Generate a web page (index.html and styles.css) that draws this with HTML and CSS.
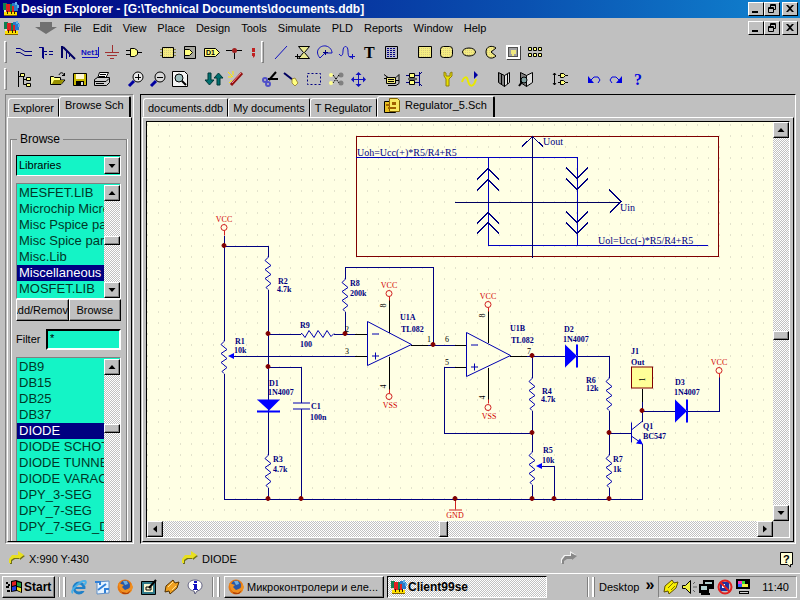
FILE: index.html
```html
<!DOCTYPE html>
<html lang="en">
<head>
  <meta charset="UTF-8">
  <meta name="viewport" content="width=device-width, initial-scale=1.0">
  <link rel="stylesheet" href="styles.css">
  <title>Design Explorer</title>
</head>
<body>
  <svg class="defs" width="0" height="0" aria-hidden="true">
    <defs>
      <symbol id="i-app" viewBox="0 0 16 16">
        <path fill="#e8e8c0" d="M1 4h2v7h-2z"/><path fill="#108050" d="M0 2h4v7h-4zM6 3h3v8h-3z"/>
        <path fill="#e02020" d="M3 3h4v8h-4zM9 4h3v7h-3z"/><path fill="#2878c8" d="M11 3h4v7h-4zM9 2h3v3h-3z"/>
        <path fill="#60b0e8" d="M12 1h2v3h-2zM14 4h2v3h-2z"/><path fill="#ffe000" d="M1 11h13v3h-13z"/>
        <path fill="#806000" d="M1 14h13v1h-13z"/><path fill="#302000" d="M4 10h1v3h-1zM8 10h1v3h-1zM11 10h1v3h-1z"/>
      </symbol>
      <symbol id="i-min" viewBox="0 0 12 10"><path d="M2 7h6v2h-6z"/></symbol>
      <symbol id="i-restore" viewBox="0 0 12 10"><path fill="none" stroke="#000" d="M4.500 3V.5h5v5H8M2.500 3.500h5v5h-5zM4 1.500h6M2 4.500h6"/></symbol>
      <symbol id="i-close" viewBox="0 0 12 10"><path d="M2 1h2l2 2 2-2h2L7 4.500 10 8H8L6 6 4 8H2l3-3.500z"/></symbol>
      <symbol id="i-up" viewBox="0 0 8 8"><path d="M4 2 0.500 6h7z"/></symbol>
      <symbol id="i-down" viewBox="0 0 8 8"><path d="M4 6 0.500 2h7z"/></symbol>
      <symbol id="i-left" viewBox="0 0 8 8"><path d="M2 4 6 .5v7z"/></symbol>
      <symbol id="i-right" viewBox="0 0 8 8"><path d="M6 4 2 .5v7z"/></symbol>
      <symbol id="i-fox" viewBox="0 0 16 16">
        <circle cx="8" cy="8" r="7.500" fill="#e87810"/><circle cx="8" cy="6.500" r="5" fill="#2858a8"/>
        <path fill="#70b0e0" d="M6 2h4l1 3-3 1z"/><path fill="#f09020" d="M1 4l3 1 3 1-2 2 3 3 5-2 1-5 2 4-2 5-5 2-5-2z"/><path fill="#b04008" d="M2 10l3 3 5 1 4-3-3 4H6z"/>
      </symbol>
      <symbol id="i-curve" viewBox="0 0 16 13">
        <path d="M1 13V9l3-4h6V2l6 3-5 4V8H6l-3 2v3z" fill="#707018"/>
        <path d="M0 12V8l3-4h6V0l6 4-5 4V7H5L2 9v3z" fill="#e8e020"/>
      </symbol>
      <!-- resistor body, 33 units long, pins at both ends -->
      <symbol id="res" viewBox="0 0 8 34" overflow="visible"><path d="M4 0V1L1 4 7 9 1 13 7 18 1 22 7 27 2 31 4 33"/></symbol>
      <pattern id="grid" x="158" y="136" width="11" height="11" patternUnits="userSpaceOnUse"><rect width="1" height="1" fill="#c6c6b4"/></pattern>
      <pattern id="dots" width="2" height="2" patternUnits="userSpaceOnUse"><rect width="2" height="2" fill="#f4ec80"/><rect width="1" height="1" fill="#d8cc80"/></pattern>
    </defs>
  </svg>

  <header class="titlebar">
    <svg class="app-icon"><use href="#i-app"/></svg>
    <h1>Design Explorer - [G:\Technical Documents\documents.ddb]</h1>
    <div class="win-buttons">
      <button aria-label="Minimize"><svg><use href="#i-min"/></svg></button>
      <button aria-label="Restore"><svg><use href="#i-restore"/></svg></button>
      <button class="close" aria-label="Close"><svg><use href="#i-close"/></svg></button>
    </div>
  </header>

  <nav class="menubar">
    <svg class="app-icon"><use href="#i-app"/></svg>
    <button class="arrow-menu" aria-label="System menu"><svg viewBox="0 0 22 12"><path fill="#707070" d="M5 0h12v5h5L11 12 0 5h5z"/></svg></button>
    <button>File</button>
    <button>Edit</button>
    <button>View</button>
    <button>Place</button>
    <button>Design</button>
    <button>Tools</button>
    <button>Simulate</button>
    <button>PLD</button>
    <button>Reports</button>
    <button>Window</button>
    <button>Help</button>
    <div class="win-buttons">
      <button aria-label="Minimize document"><svg><use href="#i-min"/></svg></button>
      <button aria-label="Restore document"><svg><use href="#i-restore"/></svg></button>
      <button class="close" aria-label="Close document"><svg><use href="#i-close"/></svg></button>
    </div>
  </nav>

  <div class="toolbar">
    <span class="grip"></span>
    <div class="tools">
      <button aria-label="Wire"><svg viewBox="0 0 16 16"><path class="n" d="M0 4.500h4l5 3h7M0 8.500h4l5 3h7"/></svg></button>
      <button aria-label="Bus"><svg viewBox="0 0 16 16"><path class="n" d="M1 3.500h4.500V15M6 7.500h3M11 7.500h4M7 10.500h2M11 10.500h4"/><path class="n" d="M4.500 4v10"/></svg></button>
      <button aria-label="Bus entry"><svg viewBox="0 0 16 16"><path fill="none" stroke="#000060" stroke-width="2" d="M2 2v12M3 3l12 12"/><path class="n" d="M6.500 6v9M9.500 9v4"/></svg></button>
      <button aria-label="Net label"><svg class="wide" viewBox="0 0 18 16"><text x="0" y="11" class="net">Net1</text><path class="b" d="M1 13.500h16M17.500 3v10"/></svg></button>
      <button aria-label="Power port"><svg viewBox="0 0 16 16"><path class="r" d="M8.500 1v7M1 8.500h14M3 11.500h10M6 14.500h4"/></svg></button>
      <button aria-label="Part"><svg viewBox="0 0 16 16"><path class="k" fill="#ffff80" d="M4.500 4.500h4l3 2v4l-3 2h-4z"/><path class="k" d="M0 6.500h4M0 10.500h4M12 8.500h4"/></svg></button>
    </div>
    <div class="tools">
      <button aria-label="Sheet symbol"><svg viewBox="0 0 16 16"><path class="k" fill="url(#dots)" d="M2.500 3.500h11v10h-11z"/><path class="y" d="M0 5.500h2M0 8.500h2M0 11.500h2M14 5.500h2M14 8.500h2M14 11.500h2"/></svg></button>
      <button aria-label="Sheet entry"><svg viewBox="0 0 16 16"><path class="k" fill="#a8a8a0" d="M2.500 2.500h11v12h-11z"/><path class="k" fill="#ffff80" d="M2.500 5.500h5l3 3-3 3h-5z"/></svg></button>
      <button aria-label="Port"><svg viewBox="0 0 16 16"><path class="k" fill="#ffff80" d="M.5 4.500h11l4 4-4 4H.5z"/><text x="2" y="11" class="port">D1</text></svg></button>
      <button aria-label="Junction"><svg viewBox="0 0 16 16"><path class="k" d="M0 6.500h16M8.500 7v8"/><circle cx="8.500" cy="6.500" r="2.500" fill="#a02020"/></svg></button>
      <button class="cut" aria-label="PCB directive"><svg viewBox="0 0 16 16"><path fill="#c02020" d="M7 4h3v4h-3zM7 9h3v3l-2 2v-2h-1z"/></svg></button>
    </div>
    <span class="grip"></span>
    <div class="tools">
      <button aria-label="Line"><svg viewBox="0 0 16 16"><path class="b" d="M2 15 14 2"/></svg></button>
      <button aria-label="Polygon"><svg viewBox="0 0 16 16"><path class="k" fill="#e8e890" d="M3.500 2.500h11l-5 6 5 6h-11l5-6z"/><path class="k" d="M0 12.500h6M2.500 10v5"/></svg></button>
      <button aria-label="Arc"><svg viewBox="0 0 16 16"><path class="b" fill="#c8c8b0" d="M3 14C-3 7 3 1 9 2c4 1 6 4 6 7H8z"/><path class="n" d="M6 8.500h5M8.500 6v5"/></svg></button>
      <button aria-label="Bezier"><svg viewBox="0 0 16 16"><path class="b" d="M0 10c3 4 4 0 4-3 0-6 5-6 5 0 0 5 1 7 4 6M10 12.500h6M13.500 10v5"/></svg></button>
      <button aria-label="Text"><svg viewBox="0 0 16 16"><text x="3" y="14" class="tee">T</text></svg></button>
      <button aria-label="Text frame"><svg viewBox="0 0 16 16"><path class="k" fill="#b8b8c8" d="M2.500 2.500h12v12h-12z"/><path class="n" d="M4 4.500h9M4 6.500h9M4 8.500h9M4 10.500h9M4 12.500h9" stroke-dasharray="2 1"/></svg></button>
    </div>
    <div class="tools">
      <button aria-label="Rectangle"><svg viewBox="0 0 16 16"><path class="k" fill="url(#dots)" d="M1.500 2.500h13v11h-13z"/></svg></button>
      <button aria-label="Round rectangle"><svg viewBox="0 0 16 16"><rect class="k" fill="url(#dots)" x="1.500" y="2.500" width="12" height="11" rx="3"/></svg></button>
      <button aria-label="Ellipse"><svg viewBox="0 0 16 16"><ellipse class="k" fill="url(#dots)" cx="8" cy="8" rx="6.500" ry="4"/></svg></button>
      <button aria-label="Pie"><svg viewBox="0 0 16 16"><path class="k" fill="url(#dots)" d="M13 4C9 1 3 2 3 8s6 8 10 4L8 8z"/></svg></button>
      <button aria-label="Image"><svg viewBox="0 0 16 16"><path fill="#404040" d="M2 2h14v14h-14z"/><path fill="#fff" d="M1 1h14v14h-14z"/><path fill="#505050" d="M3 3h10v10h-10z"/><path fill="#a0a0a0" d="M4 4h8v8h-8z"/><path fill="#f0e880" d="M6 6h5v4h-2v2h-2v-2h-1z"/></svg></button>
      <button aria-label="Array"><svg viewBox="0 0 16 16"><path class="k" fill="#ffff80" d="M1.500 3.500h3v3h-3zM6.500 3.500h3v3h-3zM11.500 3.500h3v3h-3zM1.500 9.500h3v3h-3zM6.500 9.500h3v3h-3zM11.500 9.500h3v3h-3z"/></svg></button>
    </div>
  </div>

  <div class="toolbar">
    <span class="grip"></span>
    <div class="tools">
      <button aria-label="Project manager"><svg viewBox="0 0 16 16"><path class="k" d="M2.500 0v16M2 5.500h3M7.500 6v7.500h3M8 8.500h2"/><path class="k" fill="#ffff80" d="M4.500 2.500h4v3h-4zM10.500 6.500h4v3h-4zM10.500 12.500h4v3h-4z"/></svg></button>
    </div>
    <div class="tools">
      <button aria-label="Open"><svg viewBox="0 0 16 16"><path class="k" fill="#ffff80" d="M.5 13.500V5.500h3l1 1h6V9H15l-4 4.500z"/><path fill="#989000" d="M4 9h10l-3 4H2z"/><path class="k" d="M9 4c1-3 4-3 5 0M12 4.500h3M14.500 2v3"/></svg></button>
      <button aria-label="Save"><svg viewBox="0 0 16 16"><path class="k" fill="#c8b800" d="M1.500 2.500h13v12h-13z"/><path fill="#fff8d0" d="M4 3h8v5h-8z"/><path d="M4 10h8v4h-8z"/><path fill="#ddd" d="M9 11h2v3h-2z"/></svg></button>
      <button aria-label="Print"><svg viewBox="0 0 16 16"><path class="k" fill="#fff" d="M5.500 1.500h9l-3 6h-8z"/><path class="k" fill="#ccc" d="M.5 8.500l3-2h12v5l-3 3H.5z"/><path class="k" d="M1 10.500h11l3-3M2 12.500h8M6 3.500h6M5 5.500h6"/></svg></button>
    </div>
    <div class="tools">
      <button aria-label="Zoom in"><svg viewBox="0 0 16 16"><path stroke="#0000a0" stroke-width="3" d="M1 15 6 10"/><circle class="k" fill="#e8e8e8" cx="10" cy="6" r="5"/><path class="k" d="M7 6.500h6M10.500 3v6"/></svg></button>
      <button aria-label="Zoom out"><svg viewBox="0 0 16 16"><path stroke="#0000a0" stroke-width="3" d="M1 15 6 10"/><circle class="k" fill="#d8d8d8" cx="10" cy="6" r="5"/><path class="k" d="M7 6.500h6"/></svg></button>
      <button aria-label="Fit document"><svg viewBox="0 0 16 16"><path class="k" fill="#f4f4f4" d="M.5.500h12l3 3v12H.5z"/><circle class="k" fill="#a0c0c0" cx="7" cy="7" r="4"/><path stroke="#000" stroke-width="2" d="M10 10l4 4"/></svg></button>
    </div>
    <div class="tools">
      <button aria-label="Up and down hierarchy"><svg class="wide" viewBox="0 0 18 16"><path fill="#007070" stroke="#003838" d="M3 2h3v7h3l-4.500 5L0 9h3zM12 14h3V7h3l-4.500-5L9 7h3z"/></svg></button>
      <button aria-label="Cross probe"><svg viewBox="0 0 16 16"><path stroke="#901010" stroke-width="3" d="M3 14 14 2"/><path stroke="#ff9090" d="M4 12 13 2"/><path stroke="#ffe800" d="M0 1l5 5M5 0v4M0 6h4M1 12l3-3"/></svg></button>
    </div>
    <div class="tools">
      <button aria-label="Cut"><svg viewBox="0 0 16 16"><path fill="none" stroke="#000" stroke-width="2" d="M7 9 14 1M6 8h10"/><g fill="none" stroke="#5050c8" stroke-width="2"><circle cx="3" cy="9" r="2"/><circle cx="6" cy="13" r="2"/></g></svg></button>
      <button aria-label="Paste"><svg viewBox="0 0 16 16"><path stroke="#000060" stroke-width="2" d="M0 2l9 7"/><path fill="#ffff80" stroke="#a09040" d="M8 8l3-1 3 5-3 3-3-3z"/></svg></button>
      <button aria-label="Select"><svg viewBox="0 0 16 16"><path class="n" stroke-dasharray="2 2" d="M1.500 2.500h13v11h-13z"/></svg></button>
      <button aria-label="Deselect"><svg viewBox="0 0 16 16"><g fill="#808080"><circle cx="13" cy="4" r="2.500"/><circle cx="13" cy="12" r="2.500"/></g><g fill="#ffff90"><circle cx="3" cy="4" r="2"/><circle cx="3" cy="12" r="2"/></g><path class="k" d="M5 4l6 8M11 4l-6 8" stroke-dasharray="2 1"/></svg></button>
      <button aria-label="Move"><svg viewBox="0 0 16 16"><path class="b" d="M2 8.500h13M8.500 2v13"/><path fill="#1010c0" d="M8.500 1l3 3h-6zM8.500 16l3-3h-6zM1 8.500l3-3v6zM16 8.500l-3-3v6z"/></svg></button>
    </div>
    <div class="tools">
      <button aria-label="Libraries"><svg viewBox="0 0 16 16"><path class="k" fill="#f0e878" d="M2.500 6.500h9v6h-9z"/><path class="k" d="M0 3.500l4 3M4 14.500h8l3-2v-9l-3 3M4 8.500h6M4 10.500h6M0 7.500h2M12 9.500h3"/></svg></button>
      <button aria-label="Part browser"><svg viewBox="0 0 16 16"><path class="k" fill="#ffff80" d="M3.500 2.500h5v4h-5zM3.500 9.500h5v4h-5z"/><path class="n" d="M13.500 1v14M0 4.500h3M0 11.500h3M9 4.500h4M9 11.500h4M14 3l2-2M14 13l2 2"/><path stroke="#000" d="M2 8h9"/></svg></button>
    </div>
    <div class="tools">
      <button aria-label="Setup"><svg viewBox="0 0 16 16"><path fill="#e8e000" stroke="#908010" d="M4 1v4l2 3v7h3V8l3-3V1l-2 1v3H6V2z"/></svg></button>
      <button aria-label="Run simulation"><svg viewBox="0 0 16 16"><path fill="none" stroke="#e8e800" stroke-width="2" d="M0 11c2-6 5-6 6-1 2 7 6 6 8-2"/><path fill="#0000a0" d="M12 0l4 4-4 4z"/></svg></button>
    </div>
    <div class="tools">
      <button aria-label="Books"><svg viewBox="0 0 16 16"><path class="k" fill="#808080" d="M2.500 1.500l6 3v11l-6-4z"/><path class="k" fill="#ddd" d="M8.500 4.500l5-3v10l-5 4z"/><path class="k" d="M5.500 3v10M11.500 3v10"/></svg></button>
      <button aria-label="Find part"><svg viewBox="0 0 16 16"><path class="k" fill="#808080" d="M2.500 1.500l6 3v11l-6-4z"/><path class="k" fill="#ddd" d="M8.500 4.500l6-3v10l-6 4z"/><circle class="k" fill="#80a0a0" cx="6" cy="9" r="3"/><path stroke="#000" stroke-width="2" d="M4 11l-3 4"/></svg></button>
    </div>
    <div class="tools">
      <button aria-label="Annotate"><svg viewBox="0 0 16 16"><path class="k" d="M2.500 2v12M1 4l1.500-2L4 4M1 12l1.500 2L4 12M6 4.500h10M6 11.500h10"/><path class="k" fill="#ffff80" d="M8.500 2.500h3l2 2-2 2h-3zM8.500 9.500h3l2 2-2 2h-3z"/></svg></button>
    </div>
    <div class="tools">
      <button aria-label="Undo"><svg viewBox="0 0 16 16"><path class="b2" d="M5 9l3-3h4l2 3-2 3"/><path fill="#0000e0" d="M2 5v7h6z"/></svg></button>
      <button aria-label="Redo"><svg viewBox="0 0 16 16"><path class="b2" d="M11 9L8 6H4L2 9l2 3"/><path fill="#0000e0" d="M14 5v7H8z"/></svg></button>
      <button aria-label="Help"><svg viewBox="0 0 16 16"><text x="4" y="14" class="tee blue">?</text></svg></button>
    </div>
  </div>

  <main>
    <aside class="frame side">
      <div class="tabs" role="tablist">
        <button role="tab">Explorer</button>
        <button role="tab" class="active" aria-selected="true">Browse Sch</button>
      </div>
      <div class="page side-page">
        <fieldset>
          <legend>Browse</legend>
          <div class="combo">
            <select aria-label="Browse"><option>Libraries</option></select>
            <span class="bevel drop"><svg class="arr"><use href="#i-down"/></svg></span>
          </div>
          <div class="list">
            <select size="7" aria-label="Libraries">
              <option>MESFET.LIB</option>
              <option>Microchip Micro</option>
              <option>Misc Pspice part</option>
              <option>Misc Spice parts</option>
              <option>Misc.Lib</option>
              <option selected>Miscellaneous</option>
              <option>MOSFET.LIB</option>
            </select>
            <div class="vscroll">
              <button class="bevel" aria-label="Scroll up"><svg class="arr"><use href="#i-up"/></svg></button>
              <span class="before-a"></span><span class="bevel thumb"></span><span class="rest"></span>
              <button class="bevel" aria-label="Scroll down"><svg class="arr"><use href="#i-down"/></svg></button>
            </div>
          </div>
          <div class="pair">
            <button class="bevel">Add/Remove</button>
            <button class="bevel">Browse</button>
          </div>
          <div class="filter">
            <label for="filter">Filter</label>
            <input id="filter" type="text" value="*">
          </div>
          <div class="list parts">
            <select size="11" aria-label="Components">
              <option>DB9</option>
              <option>DB15</option>
              <option>DB25</option>
              <option>DB37</option>
              <option selected>DIODE</option>
              <option>DIODE SCHOTTKY</option>
              <option>DIODE TUNNEL</option>
              <option>DIODE VARACTOR</option>
              <option>DPY_3-SEG</option>
              <option>DPY_7-SEG</option>
              <option>DPY_7-SEG_DP</option>
            </select>
            <div class="vscroll">
              <button class="bevel" aria-label="Scroll up"><svg class="arr"><use href="#i-up"/></svg></button>
              <span class="before-b"></span><span class="bevel thumb"></span><span class="rest"></span>
            </div>
          </div>
        </fieldset>
      </div>
    </aside>

    <section class="frame docs">
      <div class="tabs" role="tablist">
        <button role="tab">documents.ddb</button>
        <button role="tab">My documents</button>
        <button role="tab">T Regulator</button>
        <button role="tab" class="active" aria-selected="true">
          <svg class="sch" viewBox="0 0 16 16"><path class="k" fill="#e8c020" d="M.5 3.500h11v11H.5z"/><path fill="#f8e860" stroke="#806000" d="M5.500.5h8l2 2v11h-10z"/><path fill="#a06000" d="M2 6h4v2h-4zM4 9h8v2h-8zM8 4h4v3h-4z"/></svg>
          Regulator_5.Sch
        </button>
      </div>
      <div class="page doc-page">
        <div class="viewport">
          <svg class="sheet" width="626" height="398" viewBox="147 123 626 398" role="img" aria-label="Schematic">
            <rect x="147" y="123" width="626" height="398" fill="url(#grid)"/>

            <!-- transfer curve -->
            <g class="curve">
              <rect class="box" x="356.500" y="136.500" width="362" height="120"/>
              <path d="M356 157.500H577.500V245M488.500 157V245.500H708"/>
              <path class="dark" d="M532.500 137V258M455 202.500H621"/>
              <g class="thin">
                <path d="M522 147l10.500-10 10.500 10M609 190l12 12-11 11"/>
                <path d="M477 180l11-11 11 11M477 191l11-11 11 11M477 224l11-11 11 11M477 234l11-11 11 11"/>
                <path d="M566 168l11 11 11-11M566 179l11 11 11-11M566 212l11 11 11-11M566 223l11 11 11-11"/>
              </g>
            </g>
            <g class="formula">
              <text x="543" y="145">Uout</text>
              <text x="357" y="156">Uoh=Ucc(+)*R5/R4+R5</text>
              <text x="620" y="211">Uin</text>
              <text x="598" y="244">Uol=Ucc(-)*R5/R4+R5</text>
            </g>

            <!-- wires -->
            <path class="wire" d="M224.500 236V341M224.500 246.500H268.500V257M268.500 290V455M268.500 488V499M224.500 374V499.500H642.500V444
              M268.500 334.500H301M334 334.500H367M345.500 334V312M345.500 279V267.500H433.500V345M234 356.500H367
              M268.500 367.500H301.500V403M301.500 409V499M411 345.500H466M466 367.500H444.500V433.500H532.500
              M510 356.500H609.500V378M532.500 356V378M532.500 411V452M532.500 485V499M542 466.500H554.500V499
              M609.500 411V455M609.500 488V499M609 433.500H631M642.500 389V422M642 411.500H719.500V376"/>
            <path class="pin" d="M389.500 298V333M389.500 357V393M488.500 310V343M488.500 368V403M355 334.500H367M355 356.500H367M455 345.500H466M455 367.500H466M411 345.500H428M510 356.500H527M642.500 389V402"/>

            <!-- resistors -->
            <g class="body">
              <use href="#res" x="264" y="257" width="8" height="34"/>
              <use href="#res" x="220" y="341" width="8" height="34"/>
              <use href="#res" x="264" y="455" width="8" height="34"/>
              <use href="#res" x="341" y="279" width="8" height="34"/>
              <use href="#res" x="528" y="378" width="8" height="34"/>
              <use href="#res" x="528" y="452" width="8" height="34"/>
              <use href="#res" x="605" y="378" width="8" height="34"/>
              <use href="#res" x="605" y="455" width="8" height="34"/>
              <path d="M301 334l1 0 3 4 4-7 5 7 4-7 5 7 4-7 4 6 3-3"/>
              <path d="M367.500 322v44l44-21zM466.500 333v44l44-21z"/>
              <path d="M372 334.500h7M372 356.500h7M375.500 353v7M471 345.500h7M471 367.500h7M474.500 364v7"/>
              <path d="M293 403.500h17M293 409.500h17M631.500 423v20M632 430l10-8M632 437l10 7"/>
            </g>
            <g class="solid">
              <path d="M257 400h23l-11 11zM257 411h23v2h-23z"/>
              <path d="M565 345v23l12-11.500zM576 345h2v23h-2z"/>
              <path d="M675 400v23l12-11.500zM686 400h2v23h-2z"/>
              <path d="M228 356.500l6-3v6zM536 466.500l6-3v6zM643 445l-7-1 4-5z"/>
            </g>
            <rect class="conn" x="631.500" y="367.500" width="21" height="21"/>

            <!-- power ports -->
            <g class="power">
              <circle cx="224" cy="228" r="3"/><circle cx="389" cy="294" r="3"/><circle cx="389" cy="397" r="3"/>
              <circle cx="488" cy="305" r="3"/><circle cx="488" cy="408" r="3"/><circle cx="719" cy="371" r="3"/>
              <path d="M224.500 231v5M389.500 297v4M389.500 390v4M488.500 308v4M488.500 400v4M719.500 374v4M455.500 500v10M449 510.500h13"/>
            </g>
            <g class="power-text">
              <text x="224" y="222">VCC</text><text x="389" y="288">VCC</text><text x="390" y="408">VSS</text>
              <text x="488" y="299">VCC</text><text x="489" y="419">VSS</text><text x="719" y="365">VCC</text>
              <text x="455" y="518">GND</text>
            </g>

            <g class="junction">
              <circle cx="224" cy="246" r="2"/><circle cx="268" cy="334" r="2"/><circle cx="268" cy="367" r="2"/>
              <circle cx="345" cy="334" r="2"/><circle cx="433" cy="345" r="2"/><circle cx="268" cy="499" r="2"/>
              <circle cx="301" cy="499" r="2"/><circle cx="455" cy="499" r="2"/><circle cx="532" cy="356" r="2"/>
              <circle cx="532" cy="433" r="2"/><circle cx="532" cy="499" r="2"/><circle cx="554" cy="499" r="2"/>
              <circle cx="609" cy="433" r="2"/><circle cx="609" cy="499" r="2"/><circle cx="642" cy="411" r="2"/>
            </g>

            <g class="label">
              <text x="278" y="284">R2</text><text x="277" y="292">4.7k</text>
              <text x="235" y="344">R1</text><text x="234" y="353">10k</text>
              <text x="300" y="328">R9</text><text x="300" y="347">100</text>
              <text x="350" y="286">R8</text><text x="350" y="296">200k</text>
              <text x="269" y="386">D1</text><text x="268" y="395">1N4007</text>
              <text x="311" y="409">C1</text><text x="310" y="420">100n</text>
              <text x="273" y="462">R3</text><text x="273" y="472">4.7k</text>
              <text x="400" y="320">U1A</text><text x="401" y="332">TL082</text>
              <text x="510" y="331">U1B</text><text x="511" y="343">TL082</text>
              <text x="542" y="394">R4</text><text x="541" y="402">4.7k</text>
              <text x="543" y="453">R5</text><text x="542" y="463">10k</text>
              <text x="564" y="332">D2</text><text x="563" y="342">1N4007</text>
              <text x="586" y="383">R6</text><text x="586" y="391">12k</text>
              <text x="613" y="462">R7</text><text x="613" y="472">1k</text>
              <text x="631" y="354">J1</text><text x="631" y="365">Out</text>
              <text x="675" y="385">D3</text><text x="674" y="395">1N4007</text>
              <text x="643" y="429">Q1</text><text x="643" y="439">BC547</text>
            </g>
            <g class="pin-text">
              <text x="345" y="332">2</text><text x="345" y="354">3</text><text x="427" y="342">1</text>
              <text x="445" y="342">6</text><text x="445" y="365">5</text><text x="527" y="354">7</text>
              <text transform="translate(386 308) rotate(-90)">8</text>
              <text transform="translate(386 389) rotate(-90)">4</text>
              <text transform="translate(485 318) rotate(-90)">8</text>
              <text transform="translate(485 400) rotate(-90)">4</text>
              <text transform="translate(645 382) rotate(-90)">1</text>
            </g>
          </svg>
          <div class="vscroll">
            <button class="bevel" aria-label="Scroll up"><svg class="arr"><use href="#i-up"/></svg></button>
            <span class="before-c"></span><span class="bevel thumb"></span><span class="rest"></span>
            <button class="bevel" aria-label="Scroll down"><svg class="arr"><use href="#i-down"/></svg></button>
          </div>
          <div class="hscroll">
            <button class="bevel" aria-label="Scroll left"><svg class="arr"><use href="#i-left"/></svg></button>
            <span class="before-d"></span><span class="bevel thumb"></span><span class="rest"></span>
            <button class="bevel" aria-label="Scroll right"><svg class="arr"><use href="#i-right"/></svg></button>
          </div>
        </div>
      </div>
    </section>
  </main>

  <footer class="status">
    <span><svg class="mark"><use href="#i-curve"/></svg>X:990 Y:430</span>
    <span><svg class="mark"><use href="#i-curve"/></svg>DIODE</span>
    <span><svg class="mark" viewBox="0 0 16 13"><path d="M0 12V8l3-4h6V0l6 4-5 4V7H5L2 9v3z" fill="#f4f4f4"/><path d="M1 13V9l3-4h6V2l6 3-5 4V8H6l-3 2v3z" fill="#888"/></svg></span>
    <button aria-label="Help advisor"><svg viewBox="0 0 14 16"><path class="k" fill="#ffffd8" d="M.5.500h12v12H10.500v2.500l-3-2.500H.5z"/><text x="3" y="11" class="ask">?</text></svg></button>
  </footer>

  <footer class="taskbar">
    <button class="bevel start"><svg viewBox="0 0 16 16"><path fill="#000" d="M5 2l5-1 6 2v11l-5-2-6 1zM0 3h2v2h-2zM2 5h2v2h-2zM0 7h3v2h-3zM1 11h3v2h-3z"/><path fill="#e02020" d="M6 3l4-1v4l-4 1z"/><path fill="#20a040" d="M11 3l4 1v4l-4-1z"/><path fill="#2040e0" d="M6 8l4-1v4l-4 1z"/><path fill="#f0e020" d="M11 8l4 1v4l-4-2z"/></svg>Start</button>
    <span class="split"></span>
    <div class="quick">
      <button aria-label="Internet Explorer"><svg viewBox="0 0 16 16"><circle cx="8" cy="9" r="5" fill="none" stroke="#2080c8" stroke-width="3"/><path fill="#2080c8" d="M4 8h9v2h-9z"/><path fill="#c0c0c0" d="M9 10h7v2h-7z"/><path fill="none" stroke="#48b0e8" stroke-width="2" d="M2 14C-2 12 10 1 14 2c2 1 0 3-1 4"/></svg></button>
      <button aria-label="Outlook Express"><svg viewBox="0 0 16 16"><path fill="#e8f4ff" stroke="#6090c8" d="M3 3l12-1v12l-12 1z"/><path fill="none" stroke="#3080d8" stroke-width="2" d="M1 3h5v3M15 10h-4v4M4 11l8-6"/></svg></button>
      <button aria-label="Firefox"><svg><use href="#i-fox"/></svg></button>
      <button aria-label="Show desktop"><svg viewBox="0 0 16 16"><path class="k" fill="#307888" d="M.5 2.500h14v13H.5z"/><path fill="#f8f4d0" d="M3 5h9v8h-9z"/><path stroke="#000" stroke-width="2" d="M8 9l7-8"/><path fill="none" stroke="#000" d="M5 8h5v3H5z"/></svg></button>
      <button aria-label="Winamp"><svg viewBox="0 0 16 16"><path fill="#f0a020" stroke="#503000" d="M2 7l7-6 2 3 4-1-2 6-7 6-1-3-4 1z"/><path stroke="#ffe090" d="M4 8l5-5M8 11l4-4"/></svg></button>
      <button aria-label="Info"><svg viewBox="0 0 16 16"><path fill="#fff" stroke="#606080" d="M8 1c9 0 9 10 2 11l-2 3-1-3C-1 11-1 1 8 1z"/><path fill="#1010c0" d="M7 2h3v2H7zM6 5h4v5h1v1H6v-1h1V6H6z"/></svg></button>
    </div>
    <span class="split"></span>
    <button class="bevel task"><svg><use href="#i-fox"/></svg>Микроконтролери и еле...</button>
    <button class="task current"><svg><use href="#i-app"/></svg>Client99se</button>
    <span class="split last"></span>
    <button class="desk">Desktop <b>»</b></button>
    <div class="tray">
      <svg viewBox="0 0 16 16"><path fill="#f8f000" stroke="#605000" d="M2 7l7-6 2 3 4-1-2 6-7 6-1-3-4 1z"/><path stroke="#807000" d="M5 9l5-5M8 11l4-4"/></svg>
      <svg viewBox="0 0 16 16"><path fill="#f0f040" stroke="#000" d="M1.500 6.500h3l5-5v13l-5-5h-3z"/><path stroke="#606060" d="M12 8h4M12 5l2-2M12 11l2 2"/></svg>
      <svg viewBox="0 0 16 16"><path d="M4 1h11v9h-11zM0 5h10v9H0zM2 14h9v2h-9z"/><path fill="#b0d0d0" d="M6 3h7v2h-7zM2 7h6v4h-6z"/></svg>
      <svg viewBox="0 0 16 16"><path fill="#2030a0" d="M3 3h9v9h-9z"/><path fill="#fff" d="M5 5h3v4h-3z"/><circle cx="8" cy="8" r="6.500" fill="none" stroke="#e02020" stroke-width="2"/><path stroke="#e02020" stroke-width="2" d="M3 3l10 10"/></svg>
      <svg viewBox="0 0 16 16"><path d="M1 0h14v10H1zM4 12h10v3H4z"/><path fill="#ff30c0" d="M3 2h4v3H3z"/><path fill="#30e030" d="M7 2h3v3H7z"/><path fill="#3060ff" d="M3 5h4v3H3z"/><path fill="#f0f040" d="M7 5h6v3H7z"/><path fill="#d0d0d0" d="M5 13h8v1H5zM5 10h6v1H5z"/></svg>
      <time>11:40</time>
    </div>
  </footer>
</body>
</html>
```
FILE: styles.css
```css
* {
  box-sizing: border-box;
}

body {
  margin: 0;
  height: 100vh;
  display: flex;
  flex-direction: column;
  background: #c0c0c0;
  color: #000;
  font: 11px/13px "Liberation Sans", Arial, sans-serif;
  overflow: hidden;
}

button, select, input {
  font: inherit;
  color: inherit;
  border-radius: 0;
}

button {
  background: none;
  border: 0;
  padding: 0;
}

svg {
  display: block;
  flex: none;
}

.defs {
  position: absolute;
}

.bevel {
  background: #c0c0c0;
  border: 1px solid;
  border-color: #fff #000 #000 #fff;
  box-shadow: inset -1px -1px #808080;
}

.app-icon {
  width: 16px;
  height: 16px;
}

.arr {
  width: 8px;
  height: 8px;
  margin: auto;
}

/* title and menu */
.titlebar {
  height: 18px;
  display: flex;
  align-items: center;
  padding: 0 2px 0 3px;
  gap: 2px;
  color: #fff;
  background: linear-gradient(to right, #000080, #0a50b0 65%, #1084d0);
}

h1 {
  flex: 1;
  margin: 0;
  font-size: 12px;
  line-height: 18px;
  white-space: nowrap;
}

.win-buttons {
  display: flex;
  margin-left: auto;
}

.win-buttons button {
  width: 16px;
  height: 14px;
  display: grid;
  place-items: center;
  background: #c0c0c0;
  border: 1px solid;
  border-color: #fff #000 #000 #fff;
}

.win-buttons .close {
  margin-left: 2px;
}

.win-buttons svg {
  width: 12px;
  height: 10px;
}

.menubar {
  height: 20px;
  display: flex;
  align-items: center;
  gap: 11px;
  padding: 0 2px 0 4px;
}

.menubar .arrow-menu {
  margin: 0 -4px 0 4px;
}

.arrow-menu svg {
  width: 22px;
  height: 12px;
}

/* toolbars */
.toolbar {
  height: 27px;
  display: flex;
  align-items: center;
  padding-left: 4px;
}

.grip {
  width: 3px;
  height: 22px;
  margin-right: 6px;
  border: 1px solid;
  border-color: #fff #808080 #808080 #fff;
}

.tools {
  display: flex;
}

.tools + .tools {
  margin-left: 12px;
}

.tools + .grip {
  margin-left: 4px;
}

.tools button {
  width: 22px;
  height: 22px;
  display: grid;
  place-items: center;
}

.tools .cut {
  width: 12px;
  overflow: hidden;
}

.tools svg {
  width: 16px;
  height: 16px;
  overflow: visible;
}

.tools .wide {
  width: 18px;
}

.k, .n, .b, .r, .y, .b2 {
  stroke-width: 1;
}

path.k:not([fill]), .n, .b:not([fill]), .r, .y, .b2 {
  fill: none;
}

.k { stroke: #000; }
.n { stroke: #000080; }
.b { stroke: #1010c0; }
.b2 { stroke: #0000e0; }
.r { stroke: #a03030; }
.y { stroke: #808040; }

.net {
  font: bold 8px "Liberation Sans", sans-serif;
  fill: #1010c0;
}

.port {
  font: bold 7px "Liberation Sans", sans-serif;
}

.tee {
  font: bold 16px "Liberation Serif", serif;
}

.blue {
  fill: #0000e0;
}

.ask {
  font: bold 11px "Liberation Sans", sans-serif;
}

/* panels */
main {
  flex: 1;
  min-height: 0;
  display: flex;
  gap: 6px;
  padding: 2px 4px 0 5px;
}

.frame {
  display: flex;
  flex-direction: column;
  border: 1px solid;
  border-color: #808080 #fff #fff #808080;
  padding: 1px;
  min-height: 0;
}

.side {
  width: 129px;
  flex: none;
}

.docs {
  flex: 1;
  min-width: 0;
  border-color: #000 #fff #fff #000;
}

.tabs {
  display: flex;
  align-items: flex-end;
  height: 21px;
  padding-left: 1px;
}

.tabs button {
  height: 19px;
  padding: 1px 4px 0;
  border: 1px solid;
  border-color: #fff #000 transparent #fff;
  border-radius: 3px 2px 0 0;
  white-space: nowrap;
}

.tabs .active {
  height: 22px;
  margin-bottom: -1px;
  padding: 0 6px 3px;
  display: flex;
  align-items: center;
  gap: 5px;
  background: #c0c0c0;
  border-right-width: 2px;
}

.side .active {
  padding: 0 5px 3px;
}

.sch {
  width: 16px;
  height: 16px;
}

.page {
  flex: 1;
  min-height: 0;
  border: 1px solid;
  border-color: #fff #000 #000 #fff;
}

.side-page {
  display: flex;
  padding: 15px 4px 0 2px;
}

fieldset {
  flex: 1;
  min-width: 0;
  min-height: 0;
  display: flex;
  flex-direction: column;
  margin: 0;
  padding: 9px 5px 0;
  border: 1px solid #808080;
  border-bottom: 0;
  box-shadow: inset 1px 0 #fff, 1px 0 #fff;
}

legend {
  margin-left: 1px;
  padding: 0 3px;
  font-size: 12px;
}

.combo {
  position: relative;
  height: 21px;
  flex: none;
}

.combo select {
  width: 100%;
  height: 100%;
  appearance: none;
  padding: 0 2px;
  background: #14f4c6;
  border: 1px solid;
  border-color: #000 #fff #fff #000;
  outline: 0;
}

.drop {
  position: absolute;
  top: 2px;
  right: 1px;
  width: 16px;
  height: 17px;
  display: flex;
  pointer-events: none;
}

.list {
  display: flex;
  height: 116px;
  flex: none;
  margin-top: 7px;
  padding-top: 1px;
  border: 1px solid;
  border-color: #808080 #fff #fff #808080;
  background: #14f4c6;
}

.list select {
  flex: 1;
  min-width: 0;
  padding: 0;
  border: 0;
  outline: 0;
  background: none;
  color: #003828;
  font-size: 13px;
  overflow: hidden;
  scrollbar-width: none;
}

.list option {
  min-height: 16px;
  height: 16px;
  padding: 0 2px;
  line-height: 16px;
  text-overflow: clip;
}

.list option:checked {
  background: linear-gradient(#000080, #000080);
  color: #fff;
  -webkit-text-fill-color: #fff;
}

.parts {
  flex: 1 1 0;
  border-bottom: 0;
}

.vscroll, .hscroll {
  display: flex;
  background: repeating-conic-gradient(#fff 0 25%, #c0c0c0 0 50%) 0 0 / 2px 2px;
}

.vscroll {
  flex-direction: column;
  width: 16px;
}

.vscroll button, .hscroll button {
  display: flex;
  width: 16px;
  height: 16px;
  flex: none;
}

.vscroll .thumb {
  height: 9px;
}

.hscroll .thumb {
  width: 9px;
}

.rest { flex: 46; }
.before-a { height: 35px; }
.before-b { height: 49px; }
.before-c { flex: 54; }
.before-d { flex: 41; }

.pair {
  display: grid;
  grid-template-columns: 1fr 1fr;
  height: 22px;
  flex: none;
}

.pair button {
  display: flex;
  justify-content: center;
  align-items: center;
  min-width: 0;
  overflow: hidden;
}

.filter {
  display: flex;
  align-items: center;
  height: 21px;
  flex: none;
  margin-top: 8px;
}

.filter label {
  width: 30px;
}

.filter input {
  flex: 1;
  min-width: 0;
  height: 21px;
  padding: 0 2px 4px;
  background: #14f4c6;
  border: 2px solid;
  border-color: #000 #fff #fff #000;
  outline: 0;
}

.doc-page {
  display: flex;
  padding: 3px;
}

.viewport {
  flex: 1;
  min-width: 0;
  min-height: 0;
  display: grid;
  grid-template: minmax(0, 1fr) 16px / minmax(0, 1fr) 16px;
  border: 1px solid;
  border-color: #000 #fff #fff #000;
  background: #c0c0c0;
  overflow: hidden;
}

/* schematic */
.sheet {
  min-width: 100%;
  min-height: 100%;
  background: #ffffe4;
}

.sheet path, .sheet circle, .curve rect {
  fill: none;
}

.curve { stroke: #0000c0; shape-rendering: crispEdges; }
.curve .dark { stroke: #000060; }
.curve .thin { stroke: #000080; }
.curve .box { stroke: #800000; }
.wire { stroke: #000080; shape-rendering: crispEdges; }
.pin { stroke: #000; shape-rendering: crispEdges; }
.body { stroke: #0000b0; }
.sheet .solid path { fill: #0000ff; }
.conn { fill: #ffff98; stroke: #800000; }
.power { stroke: #d02020; }
.sheet .junction circle { fill: #800000; stroke: #800000; }

#res path {
  fill: none;
}

.formula, .label, .power-text, .pin-text {
  font-family: "Liberation Serif", "Times New Roman", serif;
  fill: #000080;
}

.formula {
  font-size: 10px;
}

.label {
  font-size: 8px;
  font-weight: bold;
}

.power-text {
  font-size: 8px;
  fill: #d00000;
  text-anchor: middle;
}

.pin-text {
  font-size: 8px;
  fill: #000;
}

/* status */
.status {
  height: 29px;
  display: grid;
  grid-template-columns: 173px 379px 1fr auto;
  align-items: center;
  padding: 2px 6px 0 9px;
}

.status span {
  display: flex;
  gap: 4px;
  align-items: center;
}

.mark {
  width: 16px;
  height: 13px;
  margin-bottom: 5px;
}

.status button svg {
  width: 14px;
  height: 16px;
}

/* taskbar */
.taskbar {
  height: 27px;
  display: flex;
  align-items: center;
  padding: 2px 3px 2px 2px;
  border-top: 1px solid #fff;
}

.taskbar button {
  height: 22px;
  display: flex;
  align-items: center;
}

.taskbar svg {
  width: 16px;
  height: 16px;
}

.start {
  width: 53px;
  padding: 0 3px;
  gap: 2px;
  font-weight: bold;
  font-size: 12px;
}

.split {
  width: 7px;
  height: 20px;
  flex: none;
  margin: 0 4px;
  border: solid #fff;
  border-width: 0 0 0 1px;
  box-shadow: -1px 0 #808080, inset -1px 0 #808080, inset -3px 0 #fff;
}

.split.last {
  margin-left: auto;
}

.quick {
  display: flex;
  justify-content: space-between;
  width: 134px;
  padding: 0 1px;
  margin-right: 5px;
}

.taskbar .task {
  flex: 0 1 160px;
  min-width: 0;
  padding: 0 3px;
  gap: 3px;
  white-space: nowrap;
  overflow: hidden;
}

.taskbar .current {
  margin-left: 3px;
  gap: 1px;
  font-weight: bold;
  font-size: 12px;
  border: 1px solid;
  border-color: #000 #fff #fff #000;
  background: repeating-conic-gradient(#fff 0 25%, #c0c0c0 0 50%) 0 0 / 2px 2px;
}

.desk {
  gap: 6px;
  margin-right: 4px;
}

.desk b {
  font-size: 16px;
  margin-bottom: 6px;
}

.tray {
  display: flex;
  align-items: center;
  gap: 2px;
  height: 22px;
  padding: 0 7px 0 4px;
  border: 1px solid;
  border-color: #808080 #fff #fff #808080;
}

.tray time {
  margin-left: 9px;
}
```
